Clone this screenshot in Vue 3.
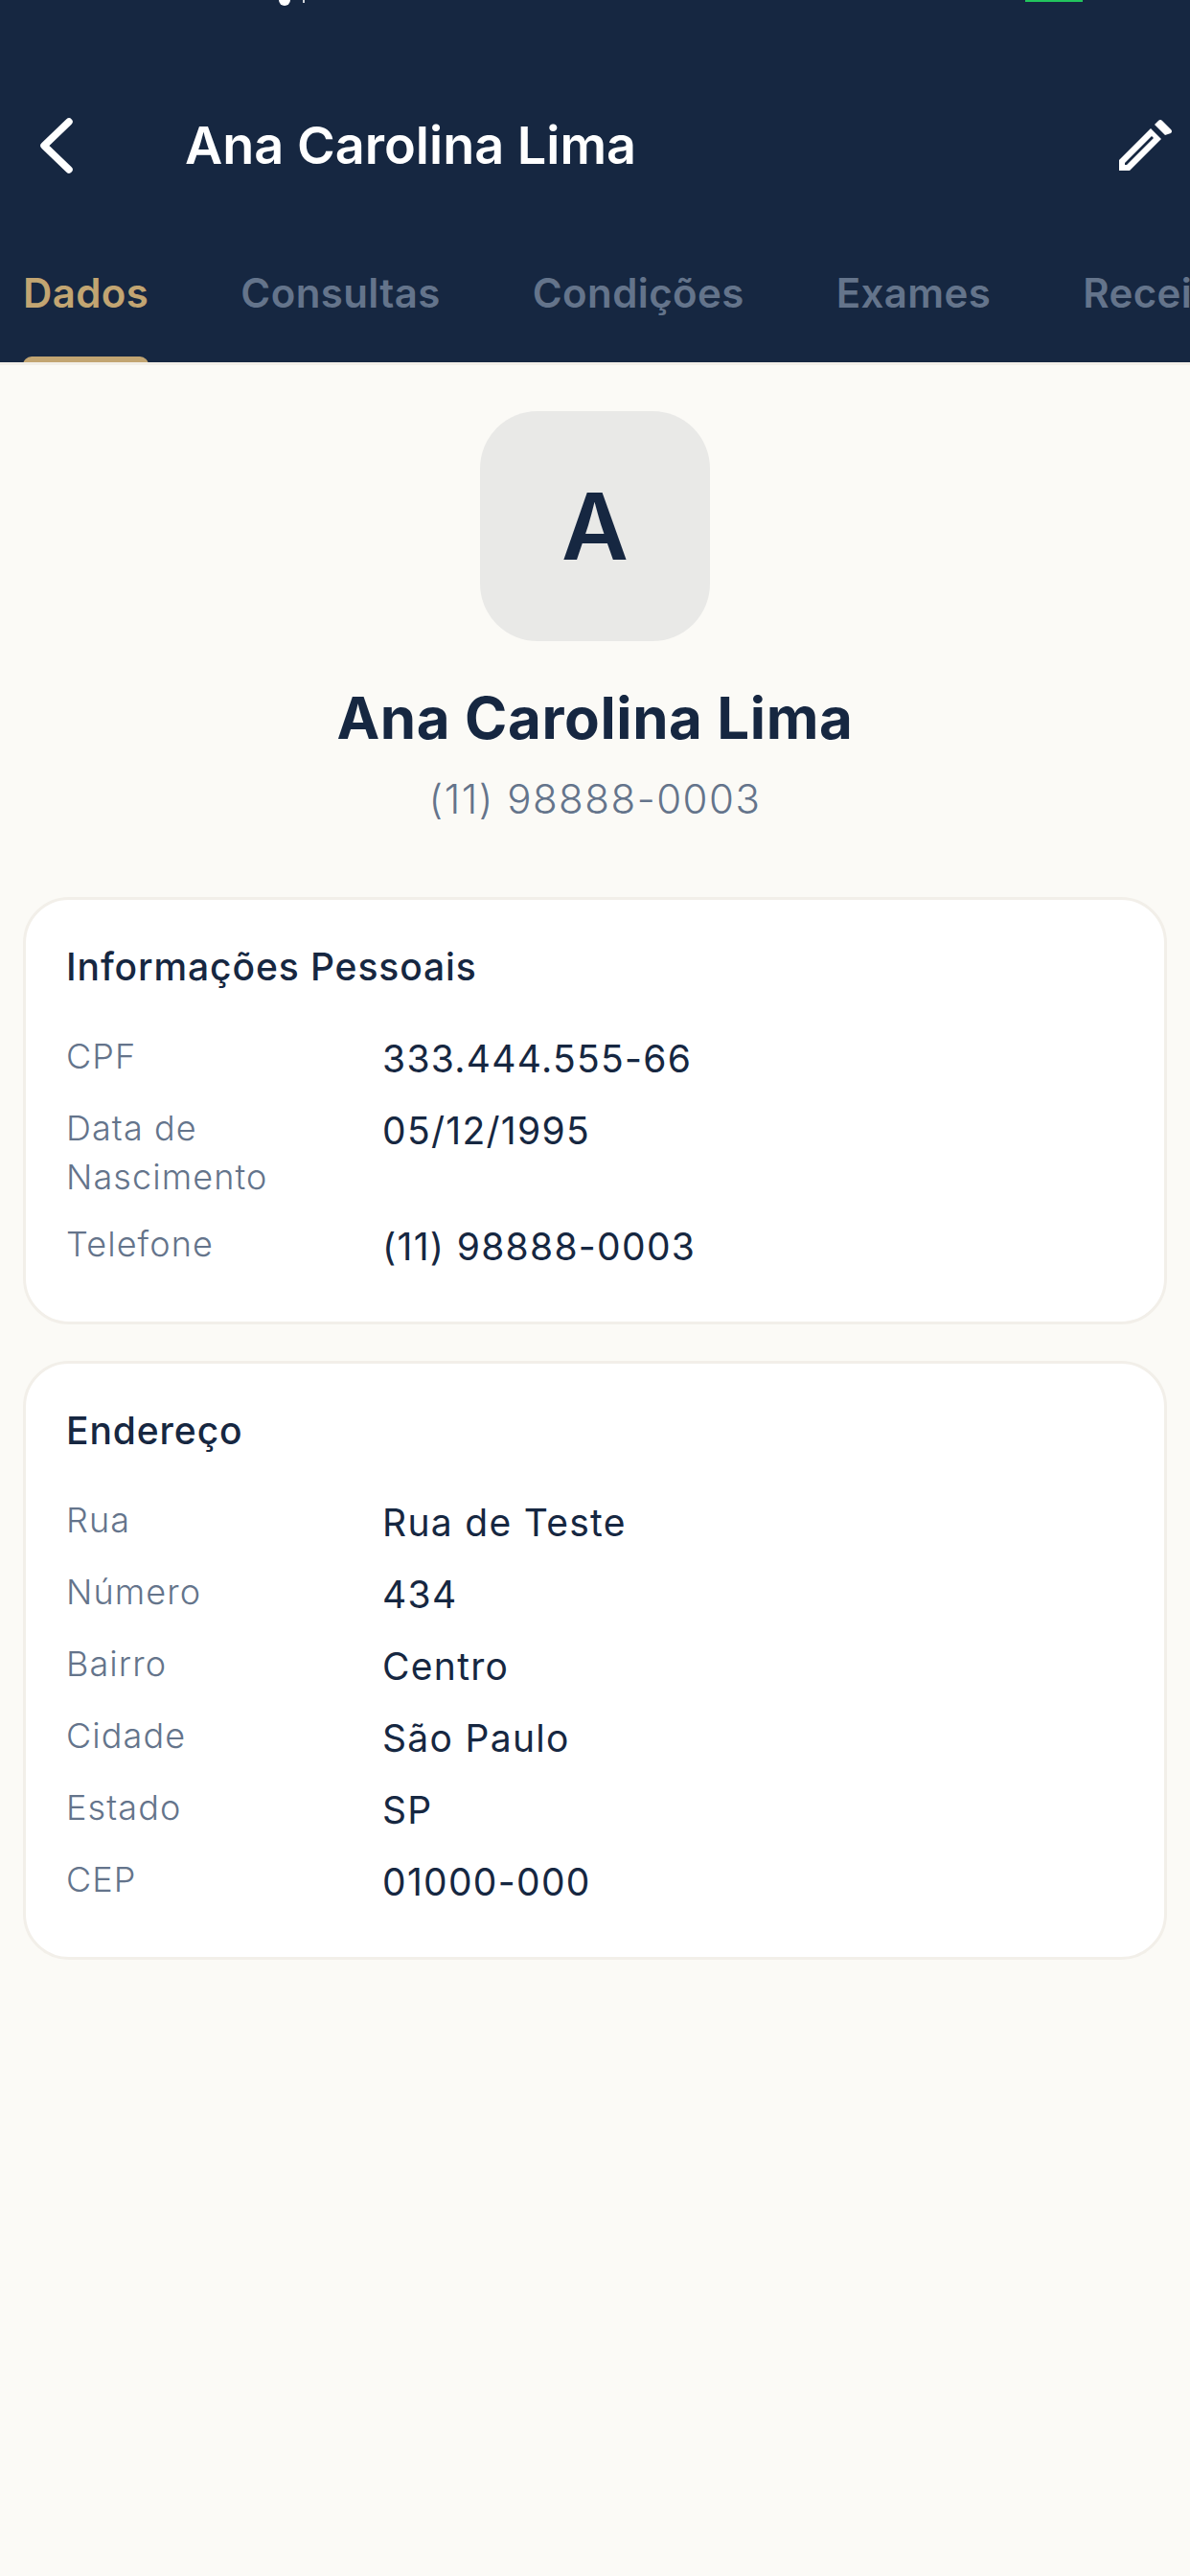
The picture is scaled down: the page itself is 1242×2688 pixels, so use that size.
<template>
  <div class="screen">
    <header class="top">
      <div class="status">
        <span class="status-dot"></span>
        <span class="status-tick"></span>
        <span class="status-battery"></span>
      </div>
      <div class="bar">
        <button class="icon-btn back" aria-label="Voltar">
          <svg width="42" height="60" viewBox="0 0 42 60">
            <path d="M35 5 L9 30 L35 55" fill="none" stroke="#fff" stroke-width="7.5" stroke-linecap="round" stroke-linejoin="round" />
          </svg>
        </button>
        <h1 class="bar-title">{{ patient.name }}</h1>
        <button class="icon-btn edit" aria-label="Editar">
          <svg width="56" height="56" viewBox="0 0 56 56">
            <path fill="#fff" fill-rule="evenodd" d="M0 54 V43 L33 10 L44 21 L11 54 Z M6 48 H8 L36 20 L34 18 L6 46 Z" />
            <path fill="#fff" d="M37 6 L41 2 Q43 0 45 2 L54 11 Q56 13 54 15 L48 17 Z" />
          </svg>
        </button>
      </div>
      <nav class="tabs">
        <span v-for="(tab, i) in tabs" :key="tab" class="tab" :class="{ active: i === 0 }">{{ tab }}</span>
      </nav>
    </header>

    <main class="content">
      <section class="profile">
        <div class="avatar">{{ patient.name[0] }}</div>
        <h2 class="name">{{ patient.name }}</h2>
        <p class="phone">{{ patient.phone }}</p>
      </section>

      <section v-for="card in cards" :key="card.title" class="card">
        <h3 class="card-title">{{ card.title }}</h3>
        <div v-for="row in card.rows" :key="row[0]" class="row">
          <span class="label">{{ row[0] }}</span>
          <span class="value">{{ row[1] }}</span>
        </div>
      </section>
    </main>
  </div>
</template>

<script setup>
const patient = { name: 'Ana Carolina Lima', phone: '(11) 98888-0003' }

const tabs = ['Dados', 'Consultas', 'Condições', 'Exames', 'Receitas']

const cards = [
  {
    title: 'Informações Pessoais',
    rows: [
      ['CPF', '333.444.555-66'],
      ['Data de Nascimento', '05/12/1995'],
      ['Telefone', '(11) 98888-0003']
    ]
  },
  {
    title: 'Endereço',
    rows: [
      ['Rua', 'Rua de Teste'],
      ['Número', '434'],
      ['Bairro', 'Centro'],
      ['Cidade', 'São Paulo'],
      ['Estado', 'SP'],
      ['CEP', '01000-000']
    ]
  }
]
</script>

<style>
html, body {
  margin: 0;
  background: #fbfaf6;
}
</style>

<style scoped>
.screen {
  width: 1242px;
  height: 2688px;
  overflow: hidden;
  background: #fbfaf6;
  font-family: Inter, "Noto Sans", sans-serif;
}

.top {
  position: relative;
  background: #162741;
  border-bottom: 3px solid #f2efe9;
}

.status-dot,
.status-tick,
.status-battery {
  position: absolute;
  top: 0;
}

.status-dot {
  left: 291px;
  width: 12px;
  height: 6px;
  background: #fff;
  border-radius: 0 0 6px 6px;
}

.status-tick {
  left: 316px;
  width: 2px;
  height: 3px;
  background: #cfd4da;
}

.status-battery {
  left: 1070px;
  width: 60px;
  height: 2px;
  background: #22c55e;
}

.bar {
  display: flex;
  align-items: center;
  height: 120px;
  padding: 92px 24px 0 0;
}

.icon-btn {
  display: flex;
  padding: 0;
  border: 0;
  background: none;
}

.back {
  margin-left: 37px;
}

.bar-title {
  flex: 1;
  margin: 0 0 0 114px;
  color: #fff;
  font-size: 54px;
  font-weight: 600;
  line-height: 66px;
}

.edit {
  margin-right: -6px;
}

.tabs {
  display: flex;
  gap: 96px;
  height: 166px;
  padding-left: 24px;
  overflow: hidden;
  box-sizing: border-box;
}

.tab {
  position: relative;
  flex: none;
  height: 166px;
  padding-top: 67px;
  box-sizing: border-box;
  color: #64748b;
  font-size: 42px;
  font-weight: 600;
  line-height: 54px;
  letter-spacing: 0.4px;
}

.tab.active {
  color: #c2a572;
}

.tab.active::after {
  content: "";
  position: absolute;
  left: 0;
  right: 0;
  bottom: -3px;
  height: 9px;
  background: #c2a572;
  border-radius: 12px 12px 0 0;
}

.content {
  padding: 48px 24px;
}

.profile {
  display: flex;
  flex-direction: column;
  align-items: center;
}

.avatar {
  display: flex;
  align-items: center;
  justify-content: center;
  width: 240px;
  height: 240px;
  border-radius: 60px;
  background: #e9e9e7;
  color: #162741;
  font-size: 96px;
  font-weight: 600;
}

.name {
  margin: 41px 0 0;
  color: #162741;
  font-size: 60px;
  font-weight: 700;
  line-height: 78px;
  letter-spacing: 0.6px;
}

.phone {
  margin: 16px 0 0;
  color: #64748b;
  font-size: 42px;
  font-weight: 300;
  line-height: 60px;
  letter-spacing: 1.5px;
}

.card {
  margin-top: 38px;
  padding: 40px 42px 50px;
  background: #fff;
  border: 3px solid #f2efe9;
  border-radius: 48px;
}

.profile + .card {
  margin-top: 72px;
}

.card-title {
  margin: 0 0 38px;
  color: #162741;
  font-size: 39px;
  font-weight: 500;
  line-height: 60px;
  letter-spacing: 0.9px;
}

.row {
  display: flex;
  margin-bottom: 19px;
}

.row:last-child {
  margin-bottom: 0;
}

.label {
  flex: none;
  width: 330px;
  color: #64748b;
  font-size: 36px;
  font-weight: 300;
  line-height: 51px;
  letter-spacing: 1.1px;
}

.value {
  color: #162741;
  font-size: 39px;
  font-weight: 400;
  line-height: 56px;
  letter-spacing: 1.3px;
}
</style>
